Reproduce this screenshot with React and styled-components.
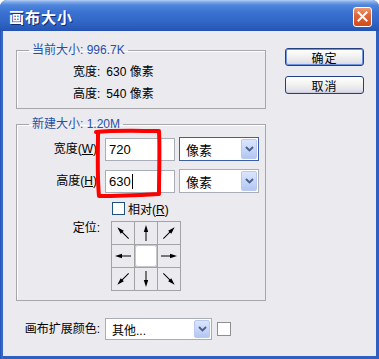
import React from 'react';
import styled, { createGlobalStyle } from 'styled-components';

const Global = createGlobalStyle`
  html, body { margin: 0; padding: 0; background: #ffffff; }
  body {
    font-family: "Liberation Sans", "Noto Sans CJK SC", sans-serif;
    font-size: 12px;
    color: #000;
  }
`;

const Window = styled.div`
  position: relative;
  width: 379px;
  height: 359px;
  box-sizing: border-box;
  display: flex;
  flex-direction: column;
  background: linear-gradient(90deg, #1c49a8 0, #2f63c8 1px, #3a6fd2 2px, #2f5fc0 3px);
  border-radius: 7px 7px 0 0;
  overflow: hidden;
`;

const TitleBar = styled.div`
  height: 31px;
  flex: none;
  display: flex;
  align-items: center;
  justify-content: space-between;
  padding: 2px 7px 0 9px;
  box-sizing: border-box;
  background: linear-gradient(180deg, #b5d0f5 0, #7fa9e8 2px, #4f86dc 5px, #3b72d2 12px, #3166c6 22px, #2858b8 29px, #2452b2 31px);
`;

const Title = styled.div`
  color: #ffffff;
  font-family: "Noto Sans CJK SC", sans-serif;
  font-weight: bold;
  font-size: 15px;
  letter-spacing: 1px;
  text-shadow: 1px 1px 0 #0c2c74;
`;

const CloseButton = styled.div`
  width: 19px;
  height: 20px;
  box-sizing: border-box;
  border: 1px solid #ffffff;
  border-radius: 3px;
  background: linear-gradient(180deg, #f09a72 0, #e0663a 40%, #cf4a1c 100%);
  display: flex;
  align-items: center;
  justify-content: center;
`;

const Body = styled.div`
  flex: 1;
  margin: 0 3px 3px 3px;
  background: #ebeaef;
  display: flex;
  padding: 12px 0 0 13px;
  gap: 19px;
`;

const LeftColumn = styled.div`
  width: 250px;
  display: flex;
  flex-direction: column;
`;

const Group = styled.fieldset`
  margin: ${p => p.$top || 0}px 0 0 0;
  padding: ${p => p.$pad};
  border: 1px solid #a7a7aa;
  box-shadow: inset 1px 1px 0 #ffffff;
  min-width: 0;
`;

const Legend = styled.legend`
  margin-left: 12px;
  padding: 0 3px;
  color: #2651a6;
  font-size: 12px;
  line-height: 14px;
`;

const InfoRow = styled.div`
  height: 22px;
  line-height: 22px;
  padding-left: 56px;
  display: flex;
  gap: 6px;
`;

const FieldRow = styled.div`
  display: flex;
  align-items: center;
  margin-top: ${p => p.$top}px;
`;

const FieldLabel = styled.label`
  width: ${p => p.$w}px;
  flex: none;
  text-align: right;
  margin-right: ${p => p.$gap}px;
  line-height: 14px;
  white-space: nowrap;
`;

const Key = styled.span`
  text-decoration: underline;
`;

const TextBox = styled.div`
  width: 70px;
  height: 23px;
  box-sizing: border-box;
  background: #ffffff;
  border: 1px solid #a9adb6;
  padding: 0 3px;
  display: flex;
  align-items: center;
  font-size: 13px;
  margin-right: 4px;
`;

const Caret = styled.span`
  display: inline-block;
  width: 1px;
  height: 15px;
  background: #000;
  margin-left: 1px;
`;

const Select = styled.div`
  width: ${p => p.$w}px;
  height: ${p => p.$h}px;
  box-sizing: border-box;
  background: #ffffff;
  border: 1px solid ${p => (p.$focus ? '#3c5fa8' : '#a9adb6')};
  display: flex;
  align-items: center;
  padding: 1px 1px 1px 6px;
  font-size: 12px;
`;

const SelectText = styled.span`
  flex: 1;
  font-size: ${p => p.$size || 12}px;
`;

const DropButton = styled.div`
  width: 16px;
  align-self: stretch;
  box-sizing: border-box;
  border: 1px solid #b8c8ee;
  border-radius: 2px;
  background: linear-gradient(180deg, #dbe6fd 0, #c3d4f8 60%, #b3c6f0 100%);
  display: flex;
  align-items: center;
  justify-content: center;
`;

const CheckRow = styled.div`
  display: flex;
  align-items: center;
  margin-top: 9px;
  padding-left: 95px;
  height: 13px;
  gap: 3px;
`;

const CheckBox = styled.div`
  width: 13px;
  height: 13px;
  box-sizing: border-box;
  border: 1px solid #1d5180;
  background: #ffffff;
`;

const AnchorRow = styled.div`
  display: flex;
  align-items: flex-start;
  margin-top: 6px;
`;

const AnchorGrid = styled.div`
  display: grid;
  grid-template-columns: repeat(3, 22px);
  grid-template-rows: repeat(3, 22px);
  gap: 1px;
  padding: 1px;
  background: #a3a3a6;
`;

const AnchorCell = styled.div`
  background: ${p => (p.$center ? '#ffffff' : '#ebeaef')};
  border-radius: ${p => (p.$center ? '3px' : '0')};
  box-shadow: ${p => (p.$center ? 'inset 0 0 0 1px #c8c8cc' : 'none')};
  display: flex;
  align-items: center;
  justify-content: center;
`;

const BottomRow = styled.div`
  display: flex;
  align-items: center;
  margin-top: 17px;
`;

const Swatch = styled.div`
  width: 14px;
  height: 14px;
  box-sizing: border-box;
  border: 1px solid #8e8e92;
  background: #ffffff;
  margin-left: 5px;
`;

const RightColumn = styled.div`
  width: 79px;
  display: flex;
  flex-direction: column;
  gap: 10px;
  margin-top: 5px;
`;

const Button = styled.div`
  height: 18px;
  box-sizing: border-box;
  border: 1px solid #22407e;
  border-radius: 3px;
  background: linear-gradient(180deg, #ffffff 0, #f4f4f2 40%, #e4e3ea 80%, #d2d5e3 100%);
  box-shadow: ${p => (p.$default ? 'inset 0 0 0 1px #6d95e0' : 'inset 0 -1px 0 #c8cde0')};
  display: flex;
  align-items: center;
  justify-content: center;
  font-family: "Noto Sans CJK SC", sans-serif;
  font-size: 12px;
  letter-spacing: 1px;
`;

const Annotation = styled.svg`
  position: absolute;
  left: 0;
  top: 0;
  pointer-events: none;
`;

const Chevron = () => (
  <svg width="9" height="6" viewBox="0 0 9 6">
    <path d="M1 1 L4.5 4.5 L8 1" fill="none" stroke="#4d5f86" strokeWidth="1.8" />
  </svg>
);

const CloseX = () => (
  <svg width="11" height="11" viewBox="0 0 11 11">
    <path d="M1.5 1.5 L9.5 9.5 M9.5 1.5 L1.5 9.5" stroke="#ffffff" strokeWidth="2" strokeLinecap="square" />
  </svg>
);

const Arrow = ({ angle }) => (
  <svg width="22" height="22" viewBox="0 0 22 22">
    <g transform={`rotate(${angle} 11 11)`}>
      <line x1="11" y1="19" x2="11" y2="8" stroke="#000" strokeWidth="1" />
      <polygon points="11,3 8.8,10 13.2,10" fill="#000" />
    </g>
  </svg>
);

const anchors = [-45, 0, 45, -90, null, 90, -135, 180, 135];

export default function App() {
  return (
    <>
      <Global />
      <Window>
        <TitleBar>
          <Title>画布大小</Title>
          <CloseButton>
            <CloseX />
          </CloseButton>
        </TitleBar>
        <Body>
          <LeftColumn>
            <Group $pad="4px 0 3px 0">
              <Legend>当前大小: 996.7K</Legend>
              <InfoRow>
                <span>宽度:</span>
                <span>630 像素</span>
              </InfoRow>
              <InfoRow>
                <span>高度:</span>
                <span>540 像素</span>
              </InfoRow>
            </Group>

            <Group $top={8} $pad="0 0 9px 0">
              <Legend>新建大小: 1.20M</Legend>
              <FieldRow $top={6}>
                <FieldLabel $w={80} $gap={8}>
                  宽度(<Key>W</Key>)
                </FieldLabel>
                <TextBox>720</TextBox>
                <Select $w={80} $h={24} $focus>
                  <SelectText $size={13}>像素</SelectText>
                  <DropButton>
                    <Chevron />
                  </DropButton>
                </Select>
              </FieldRow>
              <FieldRow $top={8}>
                <FieldLabel $w={80} $gap={8}>
                  高度(<Key>H</Key>)
                </FieldLabel>
                <TextBox>
                  630<Caret />
                </TextBox>
                <Select $w={80} $h={24}>
                  <SelectText $size={13}>像素</SelectText>
                  <DropButton>
                    <Chevron />
                  </DropButton>
                </Select>
              </FieldRow>
              <CheckRow>
                <CheckBox />
                <span>
                  相对(<Key>R</Key>)
                </span>
              </CheckRow>
              <AnchorRow>
                <FieldLabel $w={83} $gap={11}>定位:</FieldLabel>
                <AnchorGrid>
                  {anchors.map((a, i) =>
                    a === null ? (
                      <AnchorCell key={i} $center />
                    ) : (
                      <AnchorCell key={i}>
                        <Arrow angle={a} />
                      </AnchorCell>
                    )
                  )}
                </AnchorGrid>
              </AnchorRow>
            </Group>

            <BottomRow>
              <FieldLabel $w={84} $gap={5}>画布扩展颜色:</FieldLabel>
              <Select $w={107} $h={22}>
                <SelectText>其他...</SelectText>
                <DropButton>
                  <Chevron />
                </DropButton>
              </Select>
              <Swatch />
            </BottomRow>
          </LeftColumn>

          <RightColumn>
            <Button $default>确定</Button>
            <Button>取消</Button>
          </RightColumn>
        </Body>

        <Annotation width="379" height="359" viewBox="0 0 379 359">
          <path
            d="M96 132 C 115 130, 140 131, 159 131 C 160 150, 159 172, 159 194 C 140 195, 118 196, 99 196 C 97 175, 98 150, 98 134"
            fill="none"
            stroke="#ff0000"
            strokeWidth="4"
            strokeLinejoin="round"
            strokeLinecap="round"
          />
        </Annotation>
      </Window>
    </>
  );
}
